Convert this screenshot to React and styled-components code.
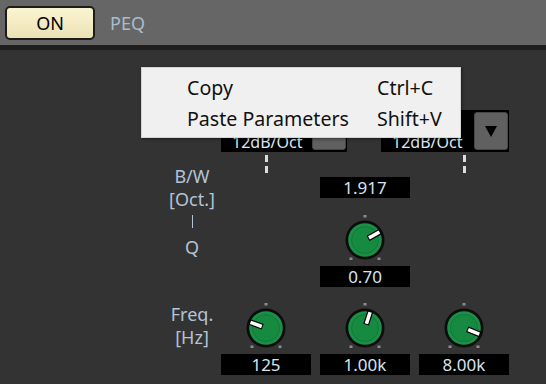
import React from "react";
import styled, { createGlobalStyle } from "styled-components";

const GlobalStyle = createGlobalStyle`
  html, body {
    margin: 0;
    padding: 0;
    background: #333333;
  }
  body {
    font-family: "Noto Sans", "Open Sans", sans-serif;
  }
`;

const LABEL = "#b2c4d6";
const VALUE = "#d6e4f2";

const Screen = styled.div`
  width: 546px;
  height: 384px;
  background: #333333;
  position: relative;
  overflow: hidden;
`;

const Header = styled.div`
  height: 45px;
  background: #666666;
  border-bottom: 5px solid #1e1e1e;
  display: flex;
  align-items: center;
  padding-left: 5px;
  gap: 15px;
`;

const OnButton = styled.div`
  width: 86px;
  height: 30px;
  border: 2px solid #1c1c1c;
  border-radius: 5px;
  background: linear-gradient(#fbf5d0, #ebe2b6);
  color: #000;
  font-size: 18px;
  display: flex;
  align-items: center;
  justify-content: center;
  line-height: 1;
`;

const Title = styled.div`
  color: #a9bccf;
  font-size: 18px;
`;

const Editor = styled.div`
  padding: 60px 0 0 172px;
`;

const Columns = styled.div`
  display: grid;
  grid-template-columns: 40px 90px 90px 90px;
  column-gap: 9px;
`;

const TypeRow = styled(Columns)`
  height: 42px;
`;

const Strip = styled(Columns)`
  grid-template-rows: 24px 22px 68px 21px 67px 21px;
`;

const Label = styled.div`
  color: ${LABEL};
  font-size: 18px;
  line-height: 23px;
  white-space: nowrap;
  display: flex;
  justify-content: center;
  margin-top: ${(p) => p.$top || 0}px;
`;

const TypeLabel = styled(Label)`
  grid-column: 1;
  grid-row: 1;
  margin-top: 2px;
`;

const LabelStack = styled.div`
  grid-column: 1;
  grid-row: 1 / -1;
  display: flex;
  flex-direction: column;
  align-items: center;
`;

const Separator = styled.div`
  width: 1px;
  height: 13px;
  margin-top: 4px;
  background: ${LABEL};
`;

const Dropdown = styled.div`
  grid-row: 1;
  grid-column: ${(p) => p.$col};
  justify-self: ${(p) => p.$justify};
  width: ${(p) => p.$width}px;
  height: 42px;
  background: #000;
  display: flex;
  justify-content: space-between;
  box-sizing: border-box;
  padding: 2px 1px 2px 11px;
`;

const DropText = styled.div`
  align-self: flex-end;
  color: #dfe8f1;
  font-size: 16px;
  line-height: 20px;
  margin-bottom: -2px;
`;

const DropButton = styled.div`
  width: 34px;
  height: 38px;
  box-sizing: border-box;
  background: #606060;
  border: 1px solid #474747;
  border-radius: 3px;
  display: flex;
  align-items: center;
  justify-content: center;
`;

const Arrow = styled.div`
  width: 0;
  height: 0;
  border-left: 6px solid transparent;
  border-right: 6px solid transparent;
  border-top: 11px solid #000;
  visibility: ${(p) => (p.$shown ? "visible" : "hidden")};
`;

const Dashes = styled.div`
  grid-row: 1;
  grid-column: ${(p) => p.$col};
  justify-self: center;
  margin-top: 3px;
  display: flex;
  flex-direction: column;
  gap: 4px;
  & > span {
    display: block;
    width: 3px;
    height: 7px;
    background: #dcdcdc;
  }
`;

const ValueBox = styled.div`
  grid-column: ${(p) => p.$col};
  grid-row: ${(p) => p.$row};
  align-self: end;
  height: 21px;
  background: #000;
  color: ${VALUE};
  font-size: 17px;
  line-height: 21px;
  text-align: center;
`;

const KnobCell = styled.div`
  grid-column: ${(p) => p.$col};
  grid-row: ${(p) => p.$row};
  align-self: end;
  justify-self: center;
  margin-bottom: 3px;
  height: 48px;
  & > svg {
    display: block;
  }
`;

const Menu = styled.div`
  position: absolute;
  left: 141px;
  top: 67px;
  width: 320px;
  box-sizing: border-box;
  background: #f0f0f0;
  border: 1px solid #d4d4d4;
  box-shadow: 1px 1px 3px rgba(0, 0, 0, 0.45);
  padding: 4px 0 3px;
  z-index: 10;
`;

const MenuItem = styled.div`
  height: 31px;
  display: grid;
  grid-template-columns: 190px auto;
  align-items: center;
  padding-left: 45px;
  color: #111;
  font-size: 19.6px;
`;

const Knob = ({ angle }) => {
  const r = (angle * Math.PI) / 180;
  const cx = 23;
  const cy = 25;
  const c = Math.cos(r);
  const s = Math.sin(r);
  const p = (d) => [cx + d * c, cy - d * s];
  const [a1, b1] = p(3.5);
  const [a2, b2] = p(17.5);
  const [w1, z1] = p(4.5);
  const [w2, z2] = p(16.5);
  return (
    <svg width="46" height="48" viewBox="0 0 46 48">
      <rect x="21.5" y="0" width="3" height="2.5" fill="#8c8c8c" />
      <rect x="7.5" y="42.5" width="3" height="2.5" fill="#8c8c8c" />
      <rect x="35.5" y="42.5" width="3" height="2.5" fill="#8c8c8c" />
      <circle cx={cx} cy={cy} r="19.5" fill="#0c0c0c" />
      <circle cx={cx} cy={cy} r="16.8" fill="#1b8e47" />
      <circle cx={cx} cy={cy} r="13.5" fill="#168a41" stroke="#127436" strokeWidth="0.8" />
      <line x1={a1} y1={b1} x2={a2} y2={b2} stroke="#000" strokeWidth="6" />
      <line x1={w1} y1={z1} x2={w2} y2={z2} stroke="#fff" strokeWidth="3.6" />
    </svg>
  );
};

const freqs = [
  { col: 2, angle: 160, value: "125" },
  { col: 3, angle: 72, value: "1.00k" },
  { col: 4, angle: -22, value: "8.00k" },
];

export default function App() {
  return (
    <Screen>
      <GlobalStyle />
      <Header>
        <OnButton>ON</OnButton>
        <Title>PEQ</Title>
      </Header>
      <Editor>
        <TypeRow>
          <TypeLabel>Type</TypeLabel>
          <Dropdown $col="2 / 4" $justify="start" $width={126}>
            <DropText>12dB/Oct</DropText>
            <DropButton>
              <Arrow />
            </DropButton>
          </Dropdown>
          <Dropdown $col="3 / 5" $justify="end" $width={128}>
            <DropText>12dB/Oct</DropText>
            <DropButton>
              <Arrow $shown />
            </DropButton>
          </Dropdown>
        </TypeRow>
        <Strip>
          <LabelStack>
            <Label $top={13}>B/W</Label>
            <Label>[Oct.]</Label>
            <Separator />
            <Label $top={8}>Q</Label>
            <Label $top={44}>Freq.</Label>
            <Label>[Hz]</Label>
          </LabelStack>
          <Dashes $col={2}>
            <span />
            <span />
          </Dashes>
          <Dashes $col={4}>
            <span />
            <span />
          </Dashes>
          <ValueBox $col={3} $row={2}>1.917</ValueBox>
          <KnobCell $col={3} $row={3}>
            <Knob angle={29} />
          </KnobCell>
          <ValueBox $col={3} $row={4}>0.70</ValueBox>
          {freqs.map((f) => (
            <React.Fragment key={f.value}>
              <KnobCell $col={f.col} $row={5}>
                <Knob angle={f.angle} />
              </KnobCell>
              <ValueBox $col={f.col} $row={6}>
                {f.value}
              </ValueBox>
            </React.Fragment>
          ))}
        </Strip>
      </Editor>
      <Menu>
        <MenuItem>
          <span>Copy</span>
          <span>Ctrl+C</span>
        </MenuItem>
        <MenuItem>
          <span>Paste Parameters</span>
          <span>Shift+V</span>
        </MenuItem>
      </Menu>
    </Screen>
  );
}
